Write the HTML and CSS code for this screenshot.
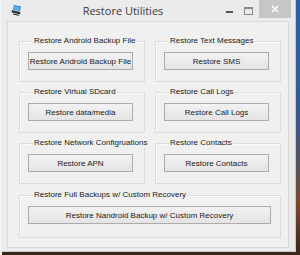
FILE: index.html
```html
<!DOCTYPE html>
<html>
<head>
<meta charset="utf-8">
<link rel="stylesheet" href="styles.css">
</head>
<body>
<div class="desk">
  <div class="window">
    <div class="titlebar">
      <svg class="appicon" width="12" height="12" viewBox="0 0 12 12">
        <path d="M3 1 L10 2.5 L9 7 L2 5.5 Z" fill="#2a7fc4"/>
        <path d="M3.5 2 L9 3.2 L8.3 6.2 L2.8 5 Z" fill="#5db1ea"/>
        <path d="M1 6 L9.5 8 L9 10.5 L0.5 8.5 Z" fill="#2b3b4b"/>
        <path d="M2 10 L8 11.3" stroke="#1c2b38" stroke-width="1"/>
      </svg>
      <div class="title">Restore Utilities</div>
      <div class="controls">
        <div class="min"></div>
        <div class="max"></div>
        <svg class="close" width="32" height="18" viewBox="0 0 32 18">
          <rect x="0" y="0" width="32" height="18" fill="#c6c6c6"/>
          <path d="M13 6 L19 12 M19 6 L13 12" stroke="#ffffff" stroke-width="1.6"/>
        </svg>
      </div>
    </div>
    <div class="client">
      <div class="grid">
        <div class="group"><span class="label">Restore Android Backup File</span><button class="btn">Restore Android Backup File</button></div>
        <div class="group"><span class="label">Restore Text Messages</span><button class="btn">Restore SMS</button></div>
        <div class="group"><span class="label">Restore Virtual SDcard</span><button class="btn">Restore data/media</button></div>
        <div class="group"><span class="label">Restore Call Logs</span><button class="btn">Restore Call Logs</button></div>
        <div class="group"><span class="label">Restore Network Configruations</span><button class="btn">Restore APN</button></div>
        <div class="group"><span class="label">Restore Contacts</span><button class="btn">Restore Contacts</button></div>
        <div class="group wide"><span class="label">Restore Full Backups w/ Custom Recovery</span><button class="btn">Restore Nandroid Backup w/ Custom Recovery</button></div>
      </div>
    </div>
  </div>
</div>
</body>
</html>
```
FILE: styles.css
```css
html, body {
  margin: 0;
  padding: 0;
}
body {
  width: 300px;
  height: 255px;
  overflow: hidden;
  background: linear-gradient(to bottom, #2b5fa8 0%, #3a5a8a 50%, #7a4a2a 80%, #3a2418 100%);
  font-family: "Liberation Sans", Arial, sans-serif;
}
.desk {
  width: 300px;
  height: 255px;
  display: flex;
  flex-direction: column;
  background: linear-gradient(to right, #f3f3f3 0px, #f3f3f3 2px, transparent 2px);
}
.window {
  width: 295px;
  height: 252px;
  margin-left: 1px;
  background: #ebebeb;
  border-right: 1px solid #c9c9c9;
  border-bottom: 1px solid #c9c9c9;
  box-sizing: border-box;
  display: flex;
  flex-direction: column;
}
.titlebar {
  height: 21px;
  display: flex;
  align-items: center;
}
.appicon {
  margin-left: 10px;
  margin-top: -1px;
  flex: none;
}
.title {
  flex: 1;
  text-align: center;
  font-family: "Open Sans", "Noto Sans", sans-serif;
  font-size: 11px;
  color: #3a3a3a;
  margin-right: 3px;
}
.controls {
  display: flex;
  align-self: flex-start;
  margin-right: 4px;
  flex: none;
}
.min {
  width: 7px;
  height: 2px;
  background: #555555;
  margin-top: 11px;
  margin-right: 11px;
}
.max {
  width: 7px;
  height: 5px;
  border: 1px solid #888888;
  border-top-width: 2px;
  margin-top: 7px;
  margin-right: 6px;
}
.close {
  display: block;
  flex: none;
}
.client {
  margin-left: 6px;
  width: 282px;
  height: 227px;
  background: #f0f0f0;
  border: 1px solid #dadada;
  box-sizing: border-box;
}
.grid {
  display: grid;
  grid-template-columns: 126px 126px;
  column-gap: 10px;
  row-gap: 10px;
  padding: 19px 0 0 11px;
}
.group {
  height: 41px;
  border: 1px solid #dcdcdc;
  box-shadow: inset 1px 1px 0 #fafafa;
  box-sizing: border-box;
  padding-left: 8px;
}
.group.wide {
  grid-column: 1 / 3;
  margin-top: 1px;
  height: 43px;
}
.label {
  display: block;
  width: max-content;
  margin: -6px 0 0 5px;
  padding: 0 1px;
  background: #f0f0f0;
  font-size: 8px;
  line-height: 10px;
  color: #1a1a1a;
  white-space: nowrap;
}
.btn {
  display: block;
  margin-top: 6px;
  width: 105px;
  height: 18px;
  padding: 0;
  font-family: "Liberation Sans", Arial, sans-serif;
  font-size: 8px;
  white-space: nowrap;
  color: #1a1a1a;
  border: 1px solid #acacac;
  background: linear-gradient(to bottom, #f2f2f2, #e4e4e4);
  border-radius: 0;
}
.wide .btn {
  width: 243px;
}
```
